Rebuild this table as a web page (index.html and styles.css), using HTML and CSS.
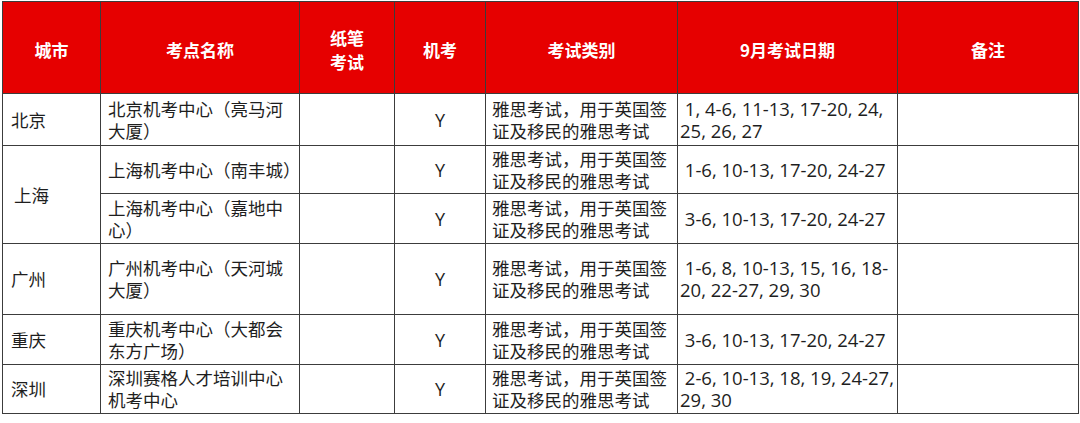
FILE: index.html
```html
<!DOCTYPE html>
<html lang="zh-CN">
<head>
<meta charset="utf-8">
<link rel="stylesheet" href="styles.css">
</head>
<body>
<div class="wrap">
<table class="exam">
<colgroup>
<col class="c-city"><col class="c-name"><col class="c-paper"><col class="c-cbt"><col class="c-type"><col class="c-date"><col class="c-note">
</colgroup>
<thead>
<tr class="head">
<th>城市</th><th>考点名称</th><th><span class="hl">纸笔</span><span class="hl">考试</span></th><th>机考</th><th>考试类别</th><th>9月考试日期</th><th>备注</th>
</tr>
</thead>
<tbody>
<tr class="r1">
<td class="city">北京</td><td class="name">北京机考中心（亮马河大厦）</td><td></td><td class="y">Y</td><td class="type">雅思考试，用于英国签证及移民的雅思考试</td><td class="date">&nbsp;1, 4-6, 11-13, 17-20, 24, 25, 26, 27</td><td></td>
</tr>
<tr class="r2">
<td class="city sh" rowspan="2">上海</td><td class="name">上海机考中心（南丰城）</td><td></td><td class="y">Y</td><td class="type">雅思考试，用于英国签证及移民的雅思考试</td><td class="date">&nbsp;1-6, 10-13, 17-20, 24-27</td><td></td>
</tr>
<tr class="r3">
<td class="name">上海机考中心（嘉地中心）</td><td></td><td class="y">Y</td><td class="type">雅思考试，用于英国签证及移民的雅思考试</td><td class="date">&nbsp;3-6, 10-13, 17-20, 24-27</td><td></td>
</tr>
<tr class="r4">
<td class="city">广州</td><td class="name">广州机考中心（天河城大厦）</td><td></td><td class="y">Y</td><td class="type">雅思考试，用于英国签证及移民的雅思考试</td><td class="date">&nbsp;1-6, 8, 10-13, 15, 16, 18-20, 22-27, 29, 30</td><td></td>
</tr>
<tr class="r5">
<td class="city">重庆</td><td class="name">重庆机考中心（大都会东方广场）</td><td></td><td class="y">Y</td><td class="type">雅思考试，用于英国签证及移民的雅思考试</td><td class="date">&nbsp;3-6, 10-13, 17-20, 24-27</td><td></td>
</tr>
<tr class="r6">
<td class="city">深圳</td><td class="name">深圳赛格人才培训中心机考中心</td><td></td><td class="y">Y</td><td class="type">雅思考试，用于英国签证及移民的雅思考试</td><td class="date">&nbsp;2-6, 10-13, 18, 19, 24-27, 29, 30</td><td></td>
</tr>
</tbody>
</table>
</div>
</body>
</html>
```
FILE: styles.css
```css
html, body {
  margin: 0;
  padding: 0;
  background: #ffffff;
}
.wrap {
  padding: 1px 0 0 2px;
}
.exam {
  border-collapse: collapse;
  table-layout: fixed;
  width: 1076px;
  font-family: "Open Sans", "Noto Sans CJK SC", sans-serif;
  font-size: 17.5px;
  line-height: 22px;
  color: #1e1e1e;
}
.c-city { width: 98px; }
.c-name { width: 199px; }
.c-paper { width: 95px; }
.c-cbt { width: 91px; }
.c-type { width: 192px; }
.c-date { width: 220px; }
.c-note { width: 181px; }
.exam th, .exam td {
  border: 1px solid #3c3c3c;
  padding: 0;
  vertical-align: middle;
  word-break: break-all;
}
.head th {
  background: #e60000;
  color: #ffffff;
  font-weight: bold;
  height: 87px;
  padding-top: 4px;
  text-align: center;
  font-family: "Noto Sans CJK SC", sans-serif;
  font-size: 17px;
  line-height: 24px;
}
.hl { display: block; }
.city { padding-left: 8px !important; text-align: left; }
.sh { padding-left: 11px !important; }
.name { padding-left: 7px !important; padding-right: 4px !important; }
.y { text-align: center; font-size: 18px; }
.type { padding-left: 6px !important; padding-right: 2px !important; }
.date { padding-left: 2px !important; padding-right: 1px !important; word-break: normal !important; font-size: 18.5px; }
.r1 td { height: 51px; }
.r2 td { height: 47px; }
.r3 td { height: 49px; }
.r4 td { height: 70px; }
.r5 td { height: 49px; }
.r6 td { height: 48px; }
```
